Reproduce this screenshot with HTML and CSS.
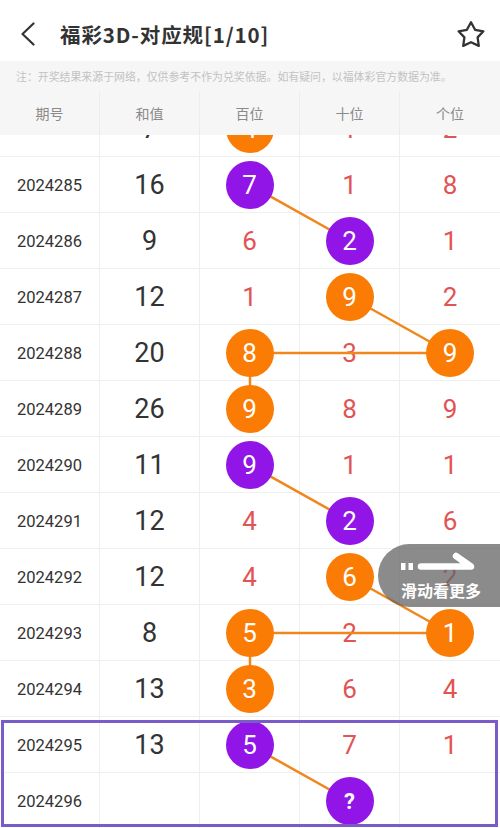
FILE: index.html
```html
<!DOCTYPE html>
<html lang="zh-CN">
<head>
<meta charset="utf-8">
<title>福彩3D-对应规</title>
<link rel="stylesheet" href="styles.css">
</head>
<body>
<div class="page">
  <header class="topbar">
    <svg class="back" width="16" height="24" viewBox="0 0 16 24"><path d="M13.5 1.5 L2.5 12 L13.5 22.5" fill="none" stroke="#333" stroke-width="2.2" stroke-linecap="round" stroke-linejoin="round"/></svg>
    <h1 class="title">福彩3D-对应规[1/10]</h1>
    <svg class="star" width="30" height="30" viewBox="0 0 30 30"><path d="M15 2.2 L19.1 9.8 L27.4 11.3 L21.6 17.4 L22.8 25.9 L15 22.2 L7.2 25.9 L8.4 17.4 L2.6 11.3 L10.9 9.8 Z" fill="none" stroke="#333" stroke-width="2.3" stroke-linejoin="round"/></svg>
  </header>
  <div class="notice">注：开奖结果来源于网络，仅供参考不作为兑奖依据。如有疑问，以福体彩官方数据为准。</div>
  <div class="thead">
    <div class="th">期号</div>
    <div class="th">和值</div>
    <div class="th">百位</div>
    <div class="th">十位</div>
    <div class="th">个位</div>
  </div>
  <div class="viewport">
    <div class="table">
      <svg class="links" width="500" height="728" viewBox="0 0 500 728">
        <g stroke="#f0861c" stroke-width="2.5" fill="none" stroke-linecap="round">
          <line x1="250" y1="84" x2="350" y2="140"/>
          <line x1="350" y1="196" x2="450" y2="252"/>
          <line x1="250" y1="252" x2="450" y2="252"/>
          <line x1="250" y1="252" x2="250" y2="308"/>
          <line x1="250" y1="364" x2="350" y2="420"/>
          <line x1="350" y1="476" x2="450" y2="532"/>
          <line x1="250" y1="532" x2="450" y2="532"/>
          <line x1="250" y1="532" x2="250" y2="588"/>
          <line x1="250" y1="644" x2="350" y2="700"/>
        </g>
      </svg>

      <div class="row">
        <div class="cell issue">2024284</div>
        <div class="cell sum">7</div>
        <div class="cell"><span class="ball orange">4</span></div>
        <div class="cell digit">1</div>
        <div class="cell digit">2</div>
      </div>
      <div class="row">
        <div class="cell issue">2024285</div>
        <div class="cell sum">16</div>
        <div class="cell"><span class="ball purple">7</span></div>
        <div class="cell digit">1</div>
        <div class="cell digit">8</div>
      </div>
      <div class="row">
        <div class="cell issue">2024286</div>
        <div class="cell sum">9</div>
        <div class="cell digit">6</div>
        <div class="cell"><span class="ball purple">2</span></div>
        <div class="cell digit">1</div>
      </div>
      <div class="row">
        <div class="cell issue">2024287</div>
        <div class="cell sum">12</div>
        <div class="cell digit">1</div>
        <div class="cell"><span class="ball orange">9</span></div>
        <div class="cell digit">2</div>
      </div>
      <div class="row">
        <div class="cell issue">2024288</div>
        <div class="cell sum">20</div>
        <div class="cell"><span class="ball orange">8</span></div>
        <div class="cell digit">3</div>
        <div class="cell"><span class="ball orange">9</span></div>
      </div>
      <div class="row">
        <div class="cell issue">2024289</div>
        <div class="cell sum">26</div>
        <div class="cell"><span class="ball orange">9</span></div>
        <div class="cell digit">8</div>
        <div class="cell digit">9</div>
      </div>
      <div class="row">
        <div class="cell issue">2024290</div>
        <div class="cell sum">11</div>
        <div class="cell"><span class="ball purple">9</span></div>
        <div class="cell digit">1</div>
        <div class="cell digit">1</div>
      </div>
      <div class="row">
        <div class="cell issue">2024291</div>
        <div class="cell sum">12</div>
        <div class="cell digit">4</div>
        <div class="cell"><span class="ball purple">2</span></div>
        <div class="cell digit">6</div>
      </div>
      <div class="row">
        <div class="cell issue">2024292</div>
        <div class="cell sum">12</div>
        <div class="cell digit">4</div>
        <div class="cell"><span class="ball orange">6</span></div>
        <div class="cell digit">2</div>
      </div>
      <div class="row">
        <div class="cell issue">2024293</div>
        <div class="cell sum">8</div>
        <div class="cell"><span class="ball orange">5</span></div>
        <div class="cell digit">2</div>
        <div class="cell"><span class="ball orange">1</span></div>
      </div>
      <div class="row">
        <div class="cell issue">2024294</div>
        <div class="cell sum">13</div>
        <div class="cell"><span class="ball orange">3</span></div>
        <div class="cell digit">6</div>
        <div class="cell digit">4</div>
      </div>
      <div class="highlight">
        <div class="row">
          <div class="cell issue">2024295</div>
          <div class="cell sum">13</div>
          <div class="cell"><span class="ball purple">5</span></div>
          <div class="cell digit">7</div>
          <div class="cell digit">1</div>
        </div>
        <div class="row">
          <div class="cell issue">2024296</div>
          <div class="cell sum"></div>
          <div class="cell"></div>
          <div class="cell"><span class="ball purple q">?</span></div>
          <div class="cell"></div>
        </div>
      </div>
    </div>
  </div>

  <div class="more">
    <svg class="more-arrow" width="76" height="22" viewBox="0 0 76 22">
      <rect x="0" y="11" width="4.5" height="7" fill="#fff"/>
      <rect x="7.5" y="11" width="4.5" height="7" fill="#fff"/>
      <path d="M20 14.5 H70 L55 4" fill="none" stroke="#fff" stroke-width="6.5" stroke-linejoin="round" stroke-linecap="round"/>
    </svg>
    <div class="more-text">滑动看更多</div>
  </div>
</div>
</body>
</html>
```

FILE: styles.css
```css
* {
  box-sizing: border-box;
}

html, body {
  margin: 0;
  padding: 0;
  background: #ffffff;
}

body {
  font-family: Roboto, "Noto Sans CJK SC", "Noto Sans", sans-serif;
  color: #333333;
}

.page {
  position: relative;
  width: 500px;
  height: 828px;
  overflow: hidden;
  background: #ffffff;
}

.topbar {
  display: flex;
  align-items: center;
  height: 61px;
  padding: 6px 14px 0 20px;
  background: #ffffff;
}

.back {
  display: block;
  flex: none;
}

.title {
  flex: 1;
  margin: 0 0 0 24px;
  padding-top: 1px;
  font-family: "Noto Sans CJK SC", "Noto Sans", sans-serif;
  font-size: 20.5px;
  letter-spacing: 0.9px;
  font-weight: 700;
  color: #333333;
  line-height: 28px;
}

.star {
  display: block;
  flex: none;
  margin-top: 3px;
}

.notice {
  height: 31px;
  padding-left: 16px;
  background: #f6f6f6;
  font-family: "Noto Sans CJK SC", sans-serif;
  font-size: 10.9px;
  line-height: 31px;
  color: #c2c2c2;
  white-space: nowrap;
}

.thead {
  display: grid;
  grid-template-columns: repeat(5, 100px);
  height: 43px;
  background: #f6f6f6;
}

.th {
  display: flex;
  align-items: center;
  justify-content: center;
  font-family: "Noto Sans CJK SC", sans-serif;
  font-size: 14px;
  color: #8a8a8a;
  border-right: 1px solid #ececec;
  padding-bottom: 2px;
}

.th:last-child {
  border-right: none;
}

.viewport {
  height: 693px;
  overflow: hidden;
  position: relative;
}

.table {
  position: relative;
  margin-top: -34px;
}

.links {
  position: absolute;
  left: 0;
  top: 0;
  z-index: 1;
  pointer-events: none;
}

.row {
  display: grid;
  grid-template-columns: repeat(5, 100px);
  height: 56px;
  border-bottom: 1px solid #efefef;
}

.cell {
  display: flex;
  align-items: center;
  justify-content: center;
  border-right: 1px solid #efefef;
  padding-top: 1px;
}

.cell:last-child {
  border-right: none;
}

.issue {
  font-size: 16.5px;
  color: #333333;
}

.sum {
  font-size: 27px;
  color: #333333;
}

.digit {
  font-size: 26px;
  color: #e25353;
}

.ball {
  position: relative;
  z-index: 2;
  display: flex;
  align-items: center;
  justify-content: center;
  width: 48px;
  height: 48px;
  border-radius: 50%;
  color: #ffffff;
  font-size: 26px;
}

.ball.orange {
  background: #fb7c05;
}

.ball.purple {
  background: #9115e6;
}

.ball.q {
  font-size: 22px;
  font-weight: 700;
}

.highlight {
  position: relative;
}

.highlight::after {
  content: "";
  position: absolute;
  top: 3px;
  left: 1px;
  right: 2px;
  bottom: 2px;
  border: 3px solid #7a5cc9;
  z-index: 3;
  pointer-events: none;
}

.more {
  position: absolute;
  top: 544px;
  right: 0;
  width: 122px;
  height: 63px;
  border-radius: 32px 0 0 32px;
  background: rgba(100, 100, 100, 0.75);
  padding: 8px 0 0 23px;
  z-index: 5;
  display: flex;
  flex-direction: column;
}

.more-arrow {
  display: block;
}

.more-text {
  margin-top: 6px;
  font-family: "Noto Sans CJK SC", sans-serif;
  font-size: 16px;
  font-weight: 700;
  color: #ffffff;
  line-height: 20px;
  white-space: nowrap;
}
```
